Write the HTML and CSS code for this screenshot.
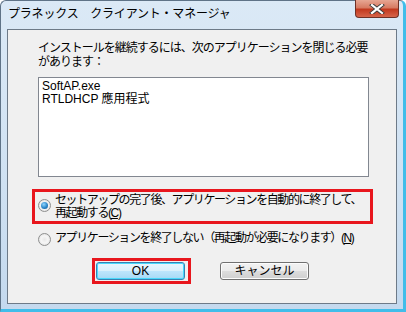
FILE: index.html
```html
<!DOCTYPE html>
<html lang="ja">
<head>
  <meta charset="UTF-8" />
  <title>プラネックス　クライアント・マネージャ</title>
  <link rel="stylesheet" href="styles.css">
</head>
<body>
  <div class="window">
    <div class="titlebar">
      <span class="title">プラネックス　クライアント・マネージャ</span>
      <span class="close">
        <svg width="16" height="10" viewBox="0 0 16 10">
          <path d="M3 1 L13 9 M13 1 L3 9" stroke="#3a3a3a" stroke-width="4" stroke-linecap="square" />
          <path d="M3 1 L13 9 M13 1 L3 9" stroke="#fff" stroke-width="2.2" stroke-linecap="square" />
        </svg>
      </span>
    </div>
    <div class="panel">
      <p class="msg">インストールを継続するには、次のアプリケーションを閉じる必要<br>があります：</p>
      <div class="listbox">
        <div>SoftAP.exe</div>
        <div>RTLDHCP 應用程式</div>
      </div>
      <div class="option marked">
        <span class="radio checked"></span>
        <span class="label">セットアップの完了後、アプリケーションを自動的に終了して、<br>再起動する(<u>C</u>)</span>
      </div>
      <div class="option plain">
        <span class="radio"></span>
        <span class="label">アプリケーションを終了しない（再起動が必要になります）(<u>N</u>)</span>
      </div>
      <div class="buttons">
        <div class="mark">
          <button class="btn default">OK</button>
        </div>
        <button class="btn">キャンセル</button>
      </div>
    </div>
  </div>
</body>
</html>
```

FILE: styles.css
```css
body {
  margin: 0;
  background-color: #fff;
  font-family: "Liberation Sans", "Noto Sans CJK JP", sans-serif;
  font-size: 12px;
  color: #000;
}
.window {
  width: 406px;
  height: 312px;
  box-sizing: border-box;
  background: linear-gradient(to bottom, #dbe9f6, #cfe1f2 60%, #c4d9ee);
  border-left: 1px solid #5f7387;
  border-top: 1px solid #5f7387;
  border-right: 3px solid #41bde9;
  border-bottom: 3px solid #41bde9;
  border-radius: 6px 6px 0 0;
  display: flex;
  flex-direction: column;
}
.titlebar {
  height: 28px;
  display: flex;
  align-items: flex-start;
  justify-content: space-between;
}
.title {
  margin: 5px 0 0 7px;
  font-size: 12px;
  line-height: 16px;
  letter-spacing: -0.2px;
}
.close {
  width: 42px;
  height: 17px;
  margin-right: 4px;
  margin-top: -1px;
  border: 1px solid #6e3026;
  border-top: none;
  border-radius: 0 0 4px 4px;
  background: linear-gradient(to bottom, #e7a693, #d77b63 45%, #c2391f 55%, #d6644a);
  display: flex;
  align-items: center;
  justify-content: center;
}
.panel {
  margin: 0 6px 0 6px;
  height: 275px;
  box-sizing: border-box;
  border: 1px solid #6d7a88;
  background-color: #f0f0f0;
  padding-left: 30px;
}
.msg {
  margin: 11px 0 0 0;
  line-height: 14px;
  letter-spacing: -1px;
}
.listbox {
  margin-top: 8px;
  width: 331px;
  height: 100px;
  box-sizing: border-box;
  border: 1px solid #828790;
  background-color: #fff;
  padding: 2px 3px;
  line-height: 13px;
}
.option {
  display: flex;
  align-items: flex-start;
  gap: 4px;
}
.marked {
  margin: 15px 0 0 -3px;
  width: 335px;
  height: 29px;
  box-sizing: border-box;
  padding: 3px 0 0 3px;
  outline: 3px solid #e8161d;
}
.plain {
  margin-top: 12px;
}
.label {
  line-height: 13px;
  letter-spacing: -1.4px;
  margin-top: -1px;
}
.radio {
  width: 11px;
  height: 11px;
  flex: none;
  border-radius: 50%;
  border: 1px solid #8e8f8f;
  background: radial-gradient(circle at 50% 50%, #e8e8e8, #f6f6f6 45%, #d5d5d5);
  box-sizing: content-box;
  display: flex;
  align-items: center;
  justify-content: center;
}
.marked .radio {
  margin-top: 4px;
}
.radio.checked::after {
  content: "";
  width: 7px;
  height: 7px;
  border-radius: 50%;
  background: radial-gradient(circle at 40% 35%, #8fd6ff, #2b86c9 55%, #0c4f8c);
}
.buttons {
  display: flex;
  align-items: flex-start;
  gap: 29px;
  margin: 12px 0 0 54px;
}
.mark {
  border: 3px solid #e8161d;
  padding: 1px 3px 1px 1px;
  display: flex;
}
.buttons > .btn {
  margin-top: 4px;
}
.btn {
  width: 89px;
  height: 18px;
  padding: 0;
  font-family: "Liberation Sans", "Noto Sans CJK JP", sans-serif;
  font-size: 12px;
  line-height: 14px;
  color: #000;
  border: 1px solid #707070;
  border-radius: 3px;
  background: linear-gradient(to bottom, #f2f2f2, #ebebeb 50%, #dddddd 50%, #cfcfcf);
  box-shadow: inset 0 0 0 1px #fcfcfc;
}
.btn.default {
  border-color: #3c7fb1;
  background: linear-gradient(to bottom, #eaf6fd, #d9f0fc 50%, #bee6fd 50%, #a7d9f5);
  box-shadow: inset 0 0 0 1px #48d8fb;
}
```
